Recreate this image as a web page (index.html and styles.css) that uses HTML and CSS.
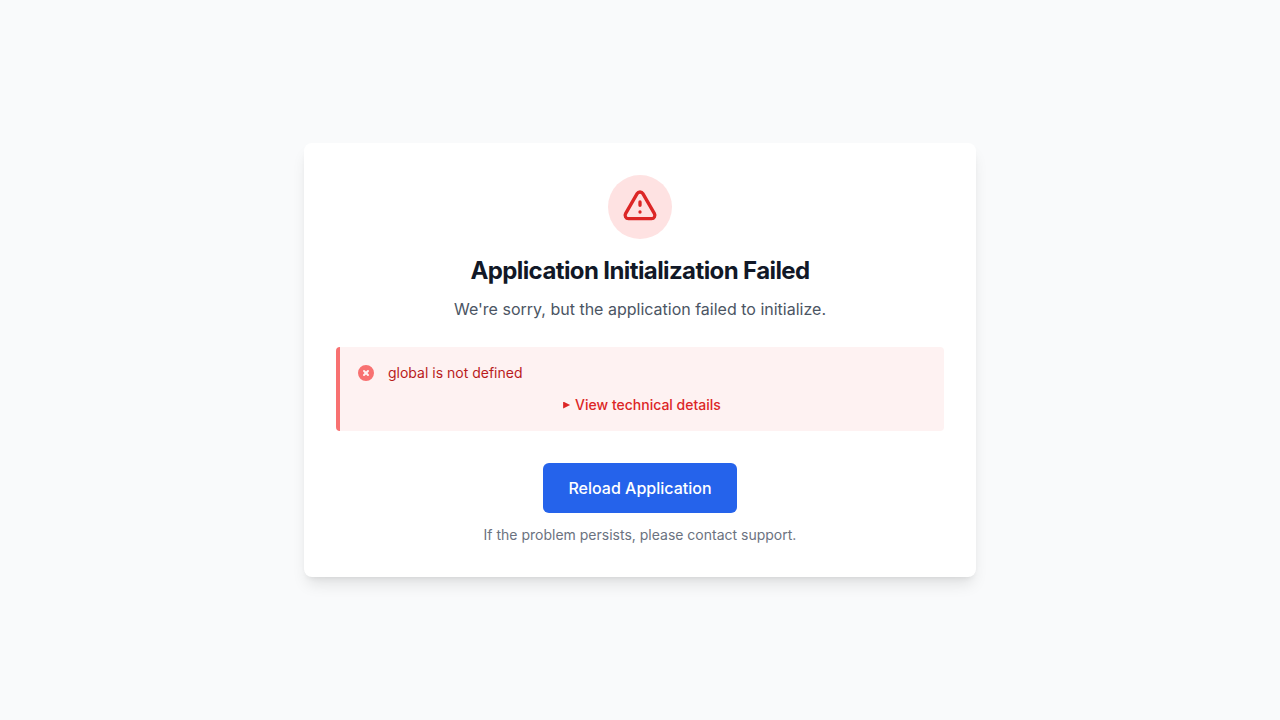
FILE: index.html
```html
<!DOCTYPE html>
<html lang="en">
<head>
<meta charset="utf-8">
<meta name="viewport" content="width=device-width, initial-scale=1">
<title>Application Initialization Failed</title>
<link rel="stylesheet" href="styles.css">
</head>
<body>
<main class="page">
  <section class="card">
    <div class="badge">
      <svg class="badge-icon" fill="none" viewBox="0 0 24 24" stroke="currentColor" aria-hidden="true"><path stroke-linecap="round" stroke-linejoin="round" stroke-width="2" d="M12 9v2m0 4h.01m-6.938 4h13.856c1.54 0 2.502-1.667 1.732-3L13.732 4c-.77-1.333-2.694-1.333-3.464 0L3.34 16c-.77 1.333.192 3 1.732 3z"/></svg>
    </div>
    <h1 class="title">Application Initialization Failed</h1>
    <p class="lead">We're sorry, but the application failed to initialize.</p>
    <div class="alert" role="alert">
      <div class="alert-row">
        <svg class="alert-icon" viewBox="0 0 20 20" fill="currentColor" aria-hidden="true"><path fill-rule="evenodd" clip-rule="evenodd" d="M10 18a8 8 0 100-16 8 8 0 000 16zM8.707 7.293a1 1 0 00-1.414 1.414L8.586 10l-1.293 1.293a1 1 0 101.414 1.414L10 11.414l1.293 1.293a1 1 0 001.414-1.414L11.414 10l1.293-1.293a1 1 0 00-1.414-1.414L10 8.586 8.707 7.293z"/></svg>
        <p class="alert-text">global is not defined</p>
      </div>
      <details class="details">
        <summary class="summary">View technical details</summary>
      </details>
    </div>
    <button class="reload" type="button">Reload Application</button>
    <p class="note">If the problem persists, please contact support.</p>
  </section>
</main>
</body>
</html>
```
FILE: styles.css
```css
* {
  box-sizing: border-box;
}

body,
h1,
p {
  margin: 0;
}

body {
  background: #f9fafb;
  color: #111827;
  font-family: Inter, "Liberation Sans", sans-serif;
  font-size: 16px;
  line-height: 24px;
}

.page {
  display: flex;
  align-items: center;
  justify-content: center;
  min-height: 100vh;
  padding: 16px;
}

.card {
  width: 100%;
  max-width: 672px;
  padding: 32px;
  border-radius: 8px;
  background: #fff;
  box-shadow: 0 10px 15px -3px rgb(0 0 0 / 0.1), 0 4px 6px -4px rgb(0 0 0 / 0.1);
  text-align: center;
}

.badge {
  display: flex;
  align-items: center;
  justify-content: center;
  width: 64px;
  height: 64px;
  margin: 0 auto 16px;
  border-radius: 50%;
  background: #fee2e2;
  color: #dc2626;
}

.badge-icon {
  width: 40px;
  height: 40px;
}

.title {
  margin-bottom: 8px;
  font-size: 24px;
  font-weight: 700;
  line-height: 32px;
  letter-spacing: -0.025em;
}

.lead {
  margin-bottom: 24px;
  color: #4b5563;
  line-height: 28px;
}

.alert {
  margin-bottom: 32px;
  padding: 16px;
  border-left: 4px solid #f87171;
  border-radius: 4px;
  background: #fef2f2;
  font-size: 14px;
  line-height: 20px;
}

.alert-row {
  display: flex;
  gap: 12px;
  text-align: left;
}

.alert-icon {
  width: 20px;
  height: 20px;
  color: #f87171;
}

.alert-text {
  color: #b91c1c;
}

.details {
  margin-top: 12px;
}

.summary {
  display: flex;
  align-items: center;
  justify-content: center;
  gap: 5px;
  color: #dc2626;
  font-weight: 500;
  list-style: none;
  cursor: pointer;
}

.summary::before {
  width: 7px;
  height: 7px;
  background: currentColor;
  clip-path: polygon(0 0, 100% 50%, 0 100%);
  content: "";
}

.reload {
  padding: 12px 24px;
  border: 1px solid transparent;
  border-radius: 6px;
  background: #2563eb;
  color: #fff;
  font: inherit;
  font-weight: 500;
  cursor: pointer;
}

.note {
  margin-top: 12px;
  color: #6b7280;
  font-size: 14px;
  line-height: 20px;
}
```
